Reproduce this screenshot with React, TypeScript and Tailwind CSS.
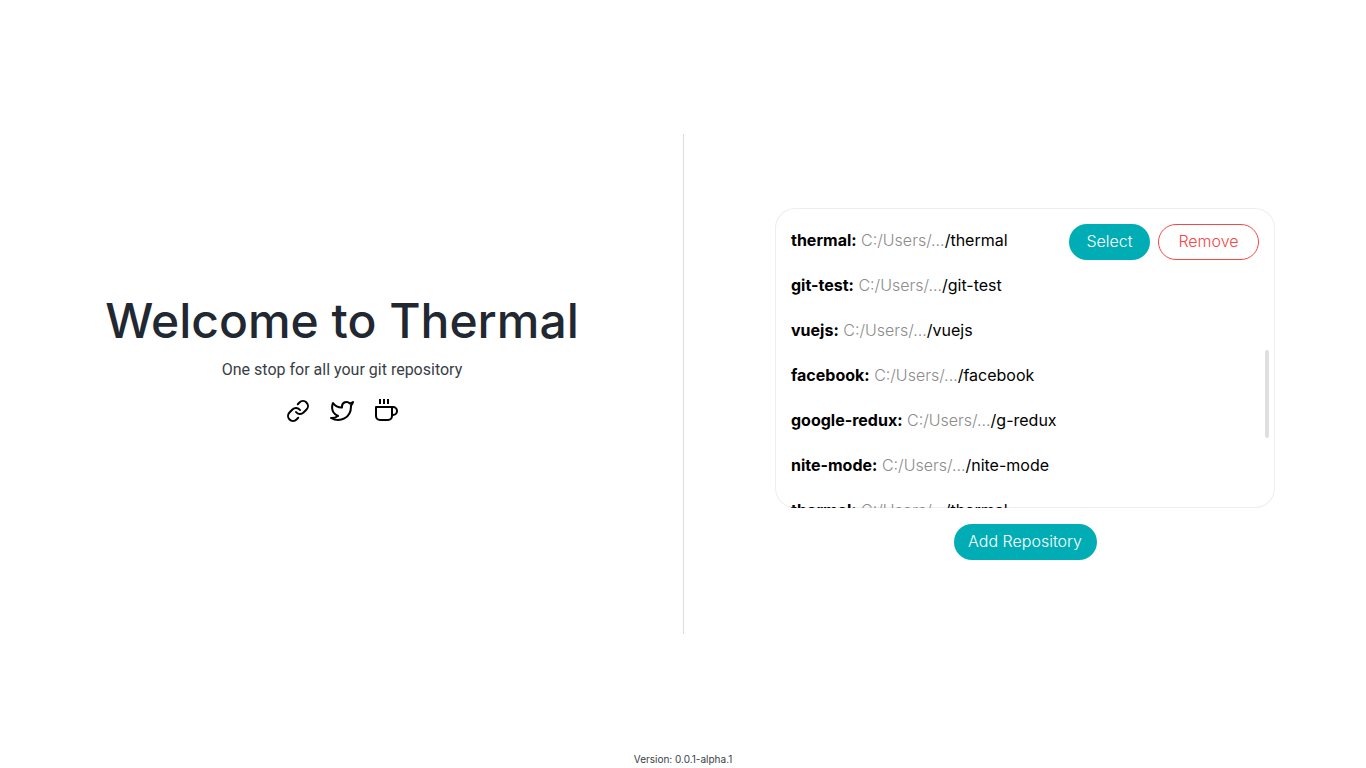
import React from "react";

const repositories = [
  { name: "thermal", folder: "thermal", active: true },
  { name: "git-test", folder: "git-test" },
  { name: "vuejs", folder: "vuejs" },
  { name: "facebook", folder: "facebook" },
  { name: "google-redux", folder: "g-redux" },
  { name: "nite-mode", folder: "nite-mode" },
  { name: "thermal", folder: "thermal" },
];

function Icon({ children }: { children: React.ReactNode }) {
  return (
    <svg
      className="size-6"
      viewBox="0 0 24 24"
      fill="none"
      stroke="currentColor"
      strokeWidth="2"
      strokeLinecap="round"
      strokeLinejoin="round"
      aria-hidden="true"
    >
      {children}
    </svg>
  );
}

function Welcome() {
  return (
    <section className="flex flex-1 flex-col items-center justify-center pb-[53px] pl-px">
      <h1 className="text-5xl/[58px] font-medium text-[#222831]">Welcome to Thermal</h1>
      <p className="mt-[10px] font-[Roboto,sans-serif] text-base/5 text-[#393e46]">
        One stop for all your git repository
      </p>
      <nav className="mt-[19px] flex gap-5">
        <a href="#website" aria-label="Website">
          <Icon>
            <path d="M10 13a5 5 0 0 0 7.54.54l3-3a5 5 0 0 0-7.07-7.07l-1.72 1.71" />
            <path d="M14 11a5 5 0 0 0-7.54-.54l-3 3a5 5 0 0 0 7.07 7.07l1.71-1.71" />
          </Icon>
        </a>
        <a href="#twitter" aria-label="Twitter">
          <Icon>
            <path d="M23 3a10.9 10.9 0 0 1-3.14 1.53 4.48 4.48 0 0 0-7.86 3v1A10.66 10.66 0 0 1 3 4s-4 9 5 13a11.64 11.64 0 0 1-7 2c9 5 20 0 20-11.5a4.5 4.5 0 0 0-.08-.83A7.72 7.72 0 0 0 23 3z" />
          </Icon>
        </a>
        <a href="#donate" aria-label="Buy me a coffee">
          <Icon>
            <path
              d="M2 8h16v9a4 4 0 0 1-4 4H6a4 4 0 0 1-4-4V8zM18 8h1a4 4 0 0 1 0 8h-1M6 0v5M10 0v5M14 0v5"
              strokeLinecap="butt"
            />
          </Icon>
        </a>
      </nav>
    </section>
  );
}

function Repositories() {
  return (
    <section className="flex flex-1 flex-col items-center justify-center gap-4">
      <div className="flex h-[300px] w-full max-w-[500px] overflow-hidden rounded-[20px] pr-[6px] shadow-[inset_0_0_0_1px_#eeeeee]">
        <ul className="flex flex-1 flex-col gap-[9px] py-4 pl-4">
          {repositories.map((repo, index) => (
            <li key={index} className="flex h-9 shrink-0 items-center justify-between pr-[6px]">
              <span className="pb-[5px] text-black">
                <strong className="font-bold">{repo.name}:</strong>{" "}
                <span className="font-light text-[#8c8c8c]">C:/Users/...</span>/{repo.folder}
              </span>
              {repo.active && (
                <span className="flex gap-2">
                  <button type="button" className="h-9 w-[81px] rounded-full bg-[#00adb5] pb-0.5 font-light text-white">
                    Select
                  </button>
                  <button
                    type="button"
                    className="h-9 w-[101px] rounded-full border border-[#f44747] pb-0.5 font-light text-[#f44747]"
                  >
                    Remove
                  </button>
                </span>
              )}
            </li>
          ))}
        </ul>
        <div className="mt-[142px] h-[88px] w-1 rounded-full bg-[#dfdfdf]" />
      </div>
      <button type="button" className="h-9 w-[143px] rounded-full bg-[#00adb5] pb-0.5 font-light text-white">
        Add Repository
      </button>
    </section>
  );
}

export default function App() {
  return (
    <div className="flex min-h-screen flex-col bg-white font-[Inter,sans-serif] text-base">
      <main className="flex flex-1 items-center pt-4">
        <div className="flex min-h-[500px] flex-1">
          <Welcome />
          <div className="w-px bg-[#dddddd]" />
          <Repositories />
        </div>
      </main>
      <footer className="h-4 text-center text-[10px]/[14px] text-[#393e46]">Version: 0.0.1-alpha.1</footer>
    </div>
  );
}
